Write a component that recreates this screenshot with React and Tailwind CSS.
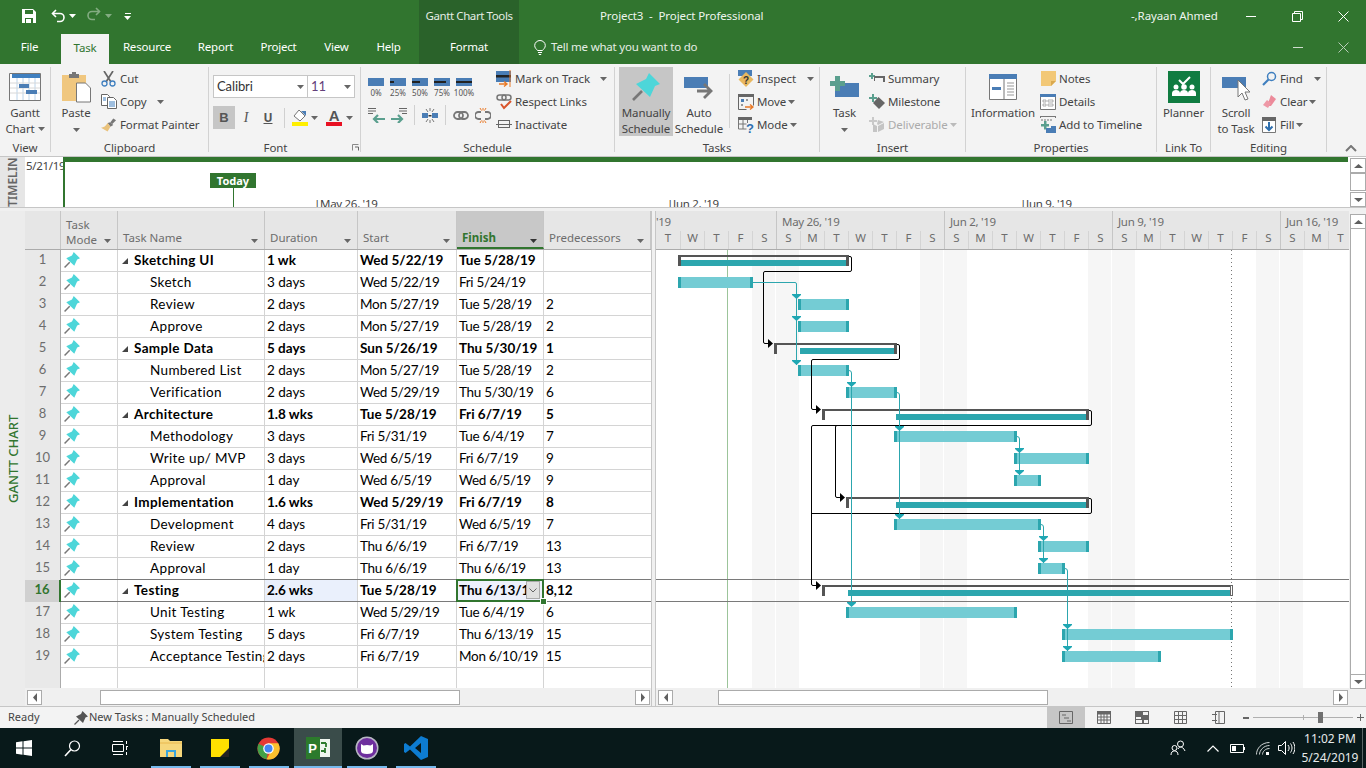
import React from "react";

const Caret = ({ c = "#666", className = "" }) => (
  <svg width="7" height="4" viewBox="0 0 7 4" className={className}><path d="M0 0h7L3.5 4z" fill={c} /></svg>
);

const Pin = ({ s = 14, c = "#4dd6d9", n = "#777" }) => (
  <svg width={s} height={s} viewBox="0 0 28 28">
    <path d="M10 18 1 27" stroke={n} strokeWidth="2.6" />
    <path d="M17 0 28 11 23 13 18 24 4 11 14 6z" fill={c} />
  </svg>
);

/* ---------- small ribbon icons ---------- */
const IcoSave = () => (
  <svg width="14" height="14" viewBox="0 0 14 14"><path d="M0 0h11l3 3v11H0z" fill="#fff" /><path d="M3 1h8v4H3z" fill="#31752f" /><path d="M3 9h8v5H3z" fill="#31752f" /><path d="M4 10h5v4H4z" fill="#fff" /></svg>
);
const IcoUndo = ({ c = "#fff" }) => (
  <svg width="15" height="14" viewBox="0 0 15 14" fill="none"><path d="M5 1 1.5 4.5 5 8" stroke={c} strokeWidth="1.6" /><path d="M2 4.5h7a4 4 0 0 1 0 8H6" stroke={c} strokeWidth="1.6" /></svg>
);
const IcoCut = () => (
  <svg width="16" height="16" viewBox="0 0 16 16" fill="none"><path d="M3 0l7 11M12 0 5 11" stroke="#666" strokeWidth="1.7" /><circle cx="3.5" cy="12.5" r="2.5" stroke="#3f7fbf" strokeWidth="1.3" /><circle cx="11.5" cy="12.5" r="2.5" stroke="#3f7fbf" strokeWidth="1.3" /></svg>
);
const IcoCopy = () => (
  <svg width="16" height="15" viewBox="0 0 16 15" fill="none"><path d="M.5.5h6l2 2v9h-8z" fill="#fff" stroke="#666" /><path d="M6.5 3.5h6l3 3v8h-9z" fill="#fff" stroke="#666" /><path d="M8 8h6M8 10h6M8 12h6M2 4h3M2 6h3" stroke="#3f7fbf" /></svg>
);
const IcoBrush = () => (
  <svg width="17" height="15" viewBox="0 0 17 15"><path d="M10 5l3 3-3 2-3-4z" fill="#777" /><path d="M13 1l3 2-4 4-2-2z" fill="#777" /><path d="M7 6l3 4-3 5-7-4c3 0 5-2 7-5z" fill="#e9c27c" /></svg>
);
const IcoMark = () => (
  <svg width="16" height="17" viewBox="0 0 16 17"><path d="M0 1h15v11H0z" fill="#4a7db5" /><path d="M0 5h15v2.5H0z" fill="#222" /><path d="M14 0v17" stroke="#e97a28" /><path d="M3 14h7M8 11.5l3 2.5-3 2.5" stroke="#e97a28" strokeWidth="1.4" fill="none" /></svg>
);
const IcoRespect = () => (
  <svg width="16" height="16" viewBox="0 0 16 16" fill="none"><rect x="1" y="1" width="9" height="5" rx="2.5" stroke="#777" strokeWidth="1.5" /><rect x="6" y="1" width="9" height="5" rx="2.5" stroke="#777" strokeWidth="1.5" /><path d="M5 10l3 4 7-7" stroke="#d9542b" strokeWidth="2" /></svg>
);
const IcoInact = () => (
  <svg width="16" height="9" viewBox="0 0 16 9" fill="none"><rect x="2.5" y=".5" width="11" height="7" stroke="#666" /><path d="M0 4.5h16" stroke="#666" /></svg>
);
const IcoInspect = () => (
  <svg width="16" height="17" viewBox="0 0 16 17"><path d="M0 0h14v6H0z" fill="#4a7db5" /><path d="M8 2l7.5 7.5L8 17 .5 9.5z" fill="#e9b85f" /><text x="8" y="13.5" fontSize="10" fontWeight="700" textAnchor="middle" fill="#333" fontFamily="Liberation Sans">?</text></svg>
);
const IcoMove = () => (
  <svg width="16" height="16" viewBox="0 0 16 16" fill="none"><path d="M.5.5h15v11M.5.5v15h8" stroke="#666" /><path d="M0 0h16v3H0z" fill="#666" /><path d="M3 5h3v3H3z" fill="#4a7db5" /><path d="M8 5h2v2H8zM3 10h2v2H3z" fill="#999" /><path d="M7 13h7M12 10.5l3 2.5-3 2.5" stroke="#e97a28" strokeWidth="1.4" /></svg>
);
const IcoMode = () => (
  <svg width="16" height="16" viewBox="0 0 16 16" fill="none"><path d="M0 0h14v3H0z" fill="#666" /><path d="M.5 3v9h8M5 3v9M.5 7h8M9.5 3v3" stroke="#777" /><text x="12" y="15.5" fontSize="13" fontWeight="700" textAnchor="middle" fill="#2f6fae" fontFamily="Liberation Sans">?</text></svg>
);
const IcoSummary = () => (
  <svg width="16" height="12" viewBox="0 0 16 12"><path d="M2 0h2v2h2v2H4v2H2V4H0V2h2z" fill="#5a9f8e" /><path d="M5 3h11v2H5z" fill="#666" /><path d="M14 3h2v6h-2zM5 5h1v3H5z" fill="#666" /></svg>
);
const IcoMilestone = () => (
  <svg width="16" height="15" viewBox="0 0 16 15"><path d="M9.5 3 16 9l-6 6-6-6z" fill="#666" /><path d="M3 0h2v3h3v2H5v3H3V5H0V3h3z" fill="#5a9f8e" /></svg>
);
const IcoDeliv = () => (
  <svg width="16" height="15" viewBox="0 0 16 15"><path d="M3 0h2v3h3v2H5v3H3V5H0V3h3z" fill="#c9c9c9" /><path d="M4 7l4 2v6H4zM9 9l6-3v6l-6 3zM9 3l6 2-6 3-1-1z" fill="#c4c4c4" /></svg>
);
const IcoNotes = () => (
  <svg width="15" height="15" viewBox="0 0 15 15"><path d="M0 0h15v10l-5 5H0z" fill="#f2c877" /><path d="M15 10h-5v5z" fill="#d9a94f" /></svg>
);
const IcoDetails = () => (
  <svg width="16" height="16" viewBox="0 0 16 16" fill="none"><path d="M.5.5h15v15H.5z" fill="#fff" stroke="#777" /><path d="M0 0h16v3H0z" fill="#4a7db5" /><path d="M3 6h3v2H3zM8 6h5v2H8zM3 10h3v2H3zM8 10h5v2H8z" stroke="#999" strokeWidth=".8" /></svg>
);
const IcoAddTl = () => (
  <svg width="16" height="17" viewBox="0 0 16 17" fill="none"><path d="M0 .5h16M.5 0v2M15.5 0v2" stroke="#777" /><path d="M1 4h11" stroke="#777" strokeDasharray="2 1" /><path d="M4 5h2.5v3H9v2.5H6.5v3H4v-3H1V8h3z" fill="#5a9f8e" /><path d="M6 12h10v5H6zM11 10h5v2h-5z" fill="#4a7db5" /></svg>
);
const IcoFind = () => (
  <svg width="15" height="15" viewBox="0 0 15 15" fill="none"><circle cx="9.5" cy="5.5" r="4" stroke="#3f7fbf" strokeWidth="1.5" /><path d="M6.5 8.5 1 14" stroke="#3f7fbf" strokeWidth="2.2" /></svg>
);
const IcoClear = () => (
  <svg width="14" height="13" viewBox="0 0 14 13"><path d="M9 0l5 4-5 7H5z" fill="#ec8a9a" /><path d="M5 5l4 3-3 5-5-3z" fill="#ee98a6" /></svg>
);
const IcoFill = () => (
  <svg width="14" height="16" viewBox="0 0 14 16" fill="none"><path d="M.5.5h13v15H.5z" fill="#fff" stroke="#777" /><path d="M0 0h14v4H0z" fill="#666" /><path d="M7 5v8M3.5 9.5 7 13l3.5-3.5" stroke="#2f6fae" strokeWidth="2" /></svg>
);

const Small = ({ icon, label, caret, c = "#444", capClass = "ml-[4px]" }) => (
  <div className="h-[23px] flex items-center whitespace-nowrap" style={{ color: c }}>
    <span className="w-[16px] flex items-center justify-center shrink-0">{icon}</span>
    <span className="ml-[3px]">{label}</span>
    {caret && <Caret className={capClass} c={c === "#444" ? "#666" : "#bbb"} />}
  </div>
);

const Big = ({ w, ml = 0, icon, l1, l2, caret, active }) => (
  <div className={`flex flex-col items-center shrink-0 h-[69px] ${active ? "bg-[#c6c6c6]" : ""}`} style={{ width: w, marginLeft: ml }}>
    <div className="h-[38px] w-full flex items-center justify-center">{icon}</div>
    <div className="h-[16px] leading-[16px] whitespace-nowrap flex items-center">{l1}</div>
    <div className="h-[15px] leading-[15px] whitespace-nowrap flex items-center">{l2}{caret === 2 && <Caret className="ml-[3px]" />}</div>
  </div>
);

const Group = ({ w, label, children, labelCls = "" }) => (
  <div className="shrink-0 h-[85px] flex flex-col border-r border-[#d2d2d2]" style={{ width: w }}>
    <div className="h-[74px] flex shrink-0">{children}</div>
    <div className={`h-[13px] leading-[13px] text-center relative shrink-0 ${labelCls}`}>{label}</div>
  </div>
);

const Pct = ({ n, label }) => (
  <div className="w-[16px] mr-[6px] flex flex-col items-center">
    <div className="h-[8px] w-[16px] bg-[#4a7db5] relative flex items-center">
      <div className="h-[2px] bg-[#222]" style={{ width: n * 16 }} />
    </div>
    <div className="text-[8px] leading-[11px] mt-[1px] text-[#555] tracking-normal">{label}</div>
  </div>
);

const IcoUndoFlip = () => <span className="inline-block scale-x-[-1]"><IcoUndo /></span>;

function TitleBar() {
  return (
    <div className="h-[32px] flex bg-[#31752f] text-white shrink-0 text-[11.5px] tracking-[-0.1px]">
      <div className="w-[419px] flex items-center pl-[22px]">
        <IcoSave />
        <span className="ml-[15px]"><IcoUndo /></span>
        <Caret className="ml-[3px]" c="#fff" />
        <span className="ml-[10px] opacity-40"><IcoUndoFlip /></span>
        <Caret className="ml-[4px] opacity-40" c="#fff" />
        <div className="ml-[12px] flex flex-col items-center gap-[2px]">
          <div className="w-[6px] h-[1px] bg-white" />
          <Caret c="#fff" />
        </div>
      </div>
      <div className="w-[100px] bg-[#2a622a] text-center leading-[32px] text-[#e4ece4] tracking-[-0.4px]">Gantt Chart Tools</div>
      <div className="w-[81px]" />
      <div className="w-[531px] leading-[32px] whitespace-pre text-[#eef4ee]">Project3  -  Project Professional</div>
      <div className="w-[115px] leading-[32px] text-[#eef4ee]">-,Rayaan Ahmed</div>
      <div className="flex-1 flex items-center">
        <div className="w-[10px] h-[1px] bg-white" />
        <svg width="11" height="11" viewBox="0 0 11 11" className="ml-[36px]" fill="none"><path d="M.5 2.5h8v8h-8zM2.5 2.5v-2h8v8h-2" stroke="#fff" /></svg>
        <svg width="11" height="11" viewBox="0 0 11 11" className="ml-[35px]" fill="none"><path d="M.5.5l10 10M10.5.5l-10 10" stroke="#fff" /></svg>
      </div>
    </div>
  );
}

function TabsBar() {
  const tab = (label, w) => (
    <div className="text-center leading-[30px]" style={{ width: w }}>{label}</div>
  );
  return (
    <div className="h-[32px] flex bg-[#31752f] text-white shrink-0 text-[11.5px] tracking-[-0.2px]">
      {tab("File", 59)}
      <div className="w-[2px]" />
      <div className="w-[48px] h-[30px] mt-[2px] bg-[#f3f3f3] text-[#31752f] text-center leading-[28px]">Task</div>
      {tab("Resource", 76)}
      {tab("Report", 61)}
      {tab("Project", 65)}
      {tab("View", 51)}
      {tab("Help", 53)}
      <div className="w-[4px]" />
      <div className="w-[100px] bg-[#2a622a] text-center leading-[30px]">Format</div>
      <div className="w-[15px]" />
      <div className="flex items-center h-[30px] text-[#e6eee6] w-[759px] whitespace-nowrap">
        <svg width="12" height="15" viewBox="0 0 12 15" fill="none" stroke="#fff"><path d="M3.5 10.5C2.5 9 .7 8 .7 5.5a5.3 5 0 0 1 10.6 0c0 2.500-1.800 3.500-2.800 5z" /><path d="M4 12.500h4M4.800 14.500h2.400" /></svg>
        <span className="ml-[5px]">Tell me what you want to do</span>
      </div>
      <div className="flex-1 flex items-center h-[30px]">
        <div className="w-[10px] h-[1px] bg-[#cfdccf]" />
        <svg width="11" height="11" viewBox="0 0 11 11" className="ml-[35px]" fill="none"><path d="M.5.5l10 10M10.5.5l-10 10" stroke="#b9cdb9" /></svg>
      </div>
    </div>
  );
}

function Ribbon() {
  return (
    <div className="h-[93px] bg-[#f3f3f3] border-b border-[#c6c6c6] pt-[3px] flex text-[#444] shrink-0 font-['Noto_Sans',sans-serif] text-[11.5px] tracking-[-0.1px]">
      <Group w={51} label="View">
        <Big w={50} l1="Gantt" l2="Chart" caret={2} icon={
          <svg width="32" height="28" viewBox="0 0 32 28" fill="none" className="mt-[2px]"><path d="M.5.5h31v27H.5z" fill="#fff" stroke="#777" /><path d="M3 1h28v4H3z" fill="#3f7fbf" /><path d="M8 5v22M14 5v22M20 5v22M26 5v22" stroke="#bcd4ea" /><path d="M1 10h30M1 15h30M1 20h30" stroke="#d8d8d8" /><path d="M10 11h10v4H10zM17 17h11v4H17z" fill="#4a7db5" /></svg>
        } />
      </Group>
      <Group w={158} label="Clipboard">
        <Big w={50} l1="Paste" l2={<Caret className="mt-[2px]" />} icon={
          <svg width="29" height="31" viewBox="0 0 29 31" className="mt-[2px]"><path d="M0 3h24v26H0z" fill="#f0c77f" /><path d="M7 2h3V0h4v2h3v4H7z" fill="#777" /><path d="M14.500 11h9l5 5v14h-14z" fill="#fff" stroke="#777" /></svg>
        } />
        <div>
          <Small icon={<IcoCut />} label="Cut" />
          <Small icon={<IcoCopy />} label="Copy" caret capClass="ml-[10px]" />
          <Small icon={<IcoBrush />} label="Format Painter" />
        </div>
      </Group>
      <Group w={152} labelCls="pr-[18px]" label={<span>Font<svg width="7" height="7" viewBox="0 0 7 7" className="absolute left-[143px] top-[3px]" fill="none"><path d="M.5 6.500v-6h6" stroke="#888" /><path d="M3 3h3.500v3.500" stroke="#666" /></svg></span>}>
        <div className="ml-[4px] mt-[8px] w-[146px]">
          <div className="flex h-[23px]">
            <div className="w-[95px] h-[23px] bg-white border border-[#c6c6c6] flex items-center justify-between px-[3px] font-['Lato',sans-serif] text-[13px] text-[#333]">Calibri<Caret /></div>
            <div className="w-[48px] h-[23px] -ml-[1px] bg-white border border-[#c6c6c6] flex items-center justify-between px-[3px] font-['Lato',sans-serif] text-[13px] text-[#63407a]">11<Caret /></div>
          </div>
          <div className="flex items-center h-[23px] mt-[8px]">
            <div className="w-[22px] h-[23px] bg-[#c6c6c6] flex items-center justify-center font-bold text-[13px] font-['Liberation_Sans',sans-serif] text-[#555]">B</div>
            <div className="w-[22px] text-center italic text-[14px] font-['Liberation_Serif',serif] text-[#555]">I</div>
            <div className="w-[22px] text-center underline font-bold text-[12px] text-[#555]">U</div>
            <div className="w-[1px] h-[20px] bg-[#d0d0d0] ml-[5px]" />
            <div className="ml-[7px] w-[16px] flex flex-col items-center">
              <svg width="16" height="12" viewBox="0 0 16 12"><path d="M7 0l6 6-5 5-6-5z" fill="#fff" stroke="#777" /><path d="M9 1h5v5z" fill="#4a7db5" /></svg>
              <div className="w-[16px] h-[4px] bg-[#ffef00]" />
            </div>
            <Caret className="ml-[3px]" />
            <div className="ml-[8px] w-[16px] flex flex-col items-center leading-[12px] text-[15px] font-bold text-[#555] font-['Liberation_Sans',sans-serif]">
              A<div className="w-[16px] h-[4px] bg-[#e81123]" />
            </div>
            <Caret className="ml-[4px]" />
          </div>
        </div>
      </Group>
      <Group w={254} label="Schedule">
        <div className="ml-[7px] w-[128px] mt-[11px]">
          <div className="flex">
            <Pct n={0} label="0%" /><Pct n={0.25} label="25%" /><Pct n={0.5} label="50%" /><Pct n={0.75} label="75%" /><Pct n={1} label="100%" />
          </div>
          <div className="flex items-center mt-[9px] h-[16px]">
            <svg width="18" height="15" viewBox="0 0 18 15" fill="none"><path d="M0 .5h8M0 3h8M0 5.500h5" stroke="#666" /><path d="M6 11h11M10 7l-4 4 4 4" stroke="#5a9f8e" strokeWidth="2.200" /></svg>
            <svg width="18" height="15" viewBox="0 0 18 15" fill="none" className="ml-[4px]"><path d="M9 .5h8M9 3h8M12 5.500h5" stroke="#666" /><path d="M1 11h11M8 7l4 4-4 4" stroke="#5a9f8e" strokeWidth="2.200" /></svg>
            <div className="w-[1px] h-[20px] bg-[#d0d0d0] ml-[6px]" />
            <svg width="16" height="15" viewBox="0 0 16 15" fill="none" className="ml-[7px]"><path d="M0 5h6v5H0zM10 5h6v5h-6z" fill="#4a7db5" /><path d="M6.500 7h3v1.500h-3z" fill="#333" /><path d="M4 1l2 3M12 1l-2 3M8 0v3M4 14l2-3M12 14l-2-3M8 12v3" stroke="#777" /></svg>
            <div className="w-[1px] h-[20px] bg-[#d0d0d0] ml-[7px]" />
            <svg width="16" height="9" viewBox="0 0 16 9" fill="none" className="ml-[7px]"><rect x="1" y="1" width="9" height="7" rx="3.500" stroke="#777" strokeWidth="1.800" /><rect x="6" y="1" width="9" height="7" rx="3.500" stroke="#777" strokeWidth="1.800" /></svg>
            <svg width="16" height="15" viewBox="0 0 16 15" fill="none" className="ml-[6px]"><path d="M6 4H3.500a3.500 3.500 0 0 0 0 7H6M10 4h2.500a3.500 3.500 0 0 1 0 7H10" stroke="#777" strokeWidth="1.800" /><path d="M5 0l1.500 2.500M11 0 9.500 2.500M8 0v2.500M5 15l1.500-2.500M11 15l-1.500-2.500M8 15v-2.500" stroke="#e97a28" /></svg>
          </div>
        </div>
        <div>
          <Small icon={<IcoMark />} label="Mark on Track" caret capClass="ml-[10px]" />
          <Small icon={<IcoRespect />} label="Respect Links" />
          <Small icon={<IcoInact />} label="Inactivate" />
        </div>
      </Group>
      <Group w={205} label="Tasks">
        <Big w={54} ml={4} active l1="Manually" l2="Schedule" icon={<span className="mt-[2px]"><Pin s={28} /></span>} />
        <Big w={52} l1="Auto" l2="Schedule" icon={
          <svg width="30" height="22" viewBox="0 0 30 22" fill="none" className="mt-[3px]"><path d="M0 0h24v11H0z" fill="#4a7db5" /><path d="M13 14h14M20 7l7 7-7 7" stroke="#777" strokeWidth="2.800" /></svg>
        } />
        <div className="w-[1px] h-[54px] bg-[#d2d2d2] ml-[4px] mt-[7px]" />
        <div className="ml-[8px]">
          <Small icon={<IcoInspect />} label="Inspect" caret capClass="ml-[11px]" />
          <Small icon={<IcoMove />} label="Move" caret capClass="ml-[2px]" />
          <Small icon={<IcoMode />} label="Mode" caret capClass="ml-[2px]" />
        </div>
      </Group>
      <Group w={146} label="Insert">
        <Big w={49} l1="Task" l2={<Caret className="mt-[2px]" />} icon={
          <svg width="29" height="21" viewBox="0 0 29 21" className="mt-[1px]"><path d="M5 7h24v14H5z" fill="#4a7db5" /><path d="M5 0h5v5h5v5h-5v5H5v-5H0V5h5z" fill="#5a9f8e" /></svg>
        } />
        <div>
          <Small icon={<IcoSummary />} label="Summary" />
          <Small icon={<IcoMilestone />} label="Milestone" />
          <Small icon={<IcoDeliv />} label="Deliverable" caret c="#ababab" capClass="ml-[2px]" />
        </div>
      </Group>
      <Group w={191} label="Properties">
        <Big w={74} l1="Information" l2="" icon={
          <svg width="28" height="26" viewBox="0 0 28 26" fill="none" className="mt-[2px]"><path d="M.5.5h27v25H.5z" fill="#fff" stroke="#777" /><path d="M0 0h28v5H0z" fill="#4a7db5" /><path d="M3 13h9v3H3z" fill="#4a7db5" /><path d="M15 5v20" stroke="#777" /><path d="M18 9h7M18 12h7M18 15h7M18 18h7M18 21h7" stroke="#999" /></svg>
        } />
        <div>
          <Small icon={<IcoNotes />} label="Notes" />
          <Small icon={<IcoDetails />} label="Details" />
          <Small icon={<IcoAddTl />} label="Add to Timeline" />
        </div>
      </Group>
      <Group w={54} label="Link To">
        <Big w={53} l1="Planner" l2="" icon={
          <svg width="32" height="32" viewBox="0 0 32 32" className="mt-[1px]"><path d="M0 0h32v32H0z" fill="#107c41" /><path d="M11 9l4 4 7-7" fill="none" stroke="#fff" strokeWidth="2" /><circle cx="8" cy="16" r="2.500" fill="#fff" /><circle cx="16" cy="16" r="2.800" fill="#fff" /><circle cx="24" cy="16" r="2.500" fill="#fff" /><path d="M4 25v-3c0-2 2-3 4-3s4 1 4 3c0-2 2-3 4-3s4 1 4 3c0-2 2-3 4-3s4 1 4 3v3z" fill="#fff" /></svg>
        } />
      </Group>
      <Group w={116} label="Editing">
        <Big w={50} l1="Scroll" l2="to Task" icon={
          <svg width="28" height="28" viewBox="0 0 28 28" className="mt-[2px]"><path d="M0 4h24v11H0z" fill="#4a7db5" /><path d="M16 7v17l4-4 3 7 3-1-3-7h5z" fill="#fff" stroke="#777" /></svg>
        } />
        <div>
          <Small icon={<IcoFind />} label="Find" caret capClass="ml-[11px]" />
          <Small icon={<IcoClear />} label="Clear" caret capClass="ml-[2px]" />
          <Small icon={<IcoFill />} label="Fill" caret capClass="ml-[2px]" />
        </div>
      </Group>
      <div className="flex-1 h-[85px] flex items-end justify-end pr-[9px]">
        <svg width="12" height="7" viewBox="0 0 12 7" fill="none"><path d="M1 6l5-5 5 5" stroke="#777" strokeWidth="2" /></svg>
      </div>
    </div>
  );
}

const SbBtn = ({ dir, w = 15, h = 15, className = "" }) => {
  const paths = { up: "M0 4 4.500 0 9 4z", down: "M0 0h9L4.500 4z", left: "M4 0v9L0 4.500z", right: "M0 0v9l4-4.500z" };
  const v = dir === "up" || dir === "down";
  return (
    <div className={`bg-white border border-[#ababab] flex items-center justify-center shrink-0 ${className}`} style={{ width: w, height: h }}>
      <svg width={v ? 9 : 4} height={v ? 4 : 9}><path d={paths[dir]} fill="#606060" /></svg>
    </div>
  );
};

function Timeline() {
  return (
    <div className="h-[51px] flex shrink-0 bg-white font-['Noto_Sans',sans-serif] text-[11.5px] text-[#444] border-b border-[#c6c6c6] overflow-hidden tracking-[-0.3px]">
      <div className="w-[25px] bg-[#e6e6e6] relative overflow-hidden">
        <div className="absolute left-[6px] top-[50px] origin-top-left -rotate-90 font-semibold text-[#666] text-[12px] leading-[14px] whitespace-nowrap tracking-normal">TIMELINE</div>
      </div>
      <div className="w-[38px] pl-[1px] pt-[1px] leading-[16px] overflow-hidden whitespace-nowrap">5/21/19</div>
      <div className="w-[1285px] relative border-l-2 border-t-[5px] border-[#31752f]">
        <div className="absolute left-[145px] top-[11px] w-[46px] h-[15px] bg-[#31752f] text-white font-bold text-[11px] leading-[15px] text-center tracking-normal">Today</div>
        <div className="absolute left-[168px] top-[26px] w-[1px] h-[24px] bg-[#31752f]" />
        <div className="absolute left-[249px] top-[34px] leading-[16px] whitespace-nowrap">|May 26, '19</div>
        <div className="absolute left-[602px] top-[34px] leading-[16px] whitespace-nowrap">|Jun 2, '19</div>
        <div className="absolute left-[955px] top-[34px] leading-[16px] whitespace-nowrap">|Jun 9, '19</div>
      </div>
      <div className="flex-1 flex flex-col items-end pt-[1px] gap-[1px]">
        <SbBtn dir="up" w={16} h={15} />
        <div className="w-[16px] h-[18px] bg-white border border-[#ababab] -mt-[1px]" />
        <SbBtn dir="down" w={16} h={15} />
      </div>
    </div>
  );
}

const rows = [
  ["Sketching UI", "1 wk", "Wed 5/22/19", "Tue 5/28/19", "", 1],
  ["Sketch", "3 days", "Wed 5/22/19", "Fri 5/24/19", "", 0],
  ["Review", "2 days", "Mon 5/27/19", "Tue 5/28/19", "2", 0],
  ["Approve", "2 days", "Mon 5/27/19", "Tue 5/28/19", "2", 0],
  ["Sample Data", "5 days", "Sun 5/26/19", "Thu 5/30/19", "1", 1],
  ["Numbered List", "2 days", "Mon 5/27/19", "Tue 5/28/19", "2", 0],
  ["Verification", "2 days", "Wed 5/29/19", "Thu 5/30/19", "6", 0],
  ["Architecture", "1.8 wks", "Tue 5/28/19", "Fri 6/7/19", "5", 1],
  ["Methodology", "3 days", "Fri 5/31/19", "Tue 6/4/19", "7", 0],
  ["Write up/ MVP", "3 days", "Wed 6/5/19", "Fri 6/7/19", "9", 0],
  ["Approval", "1 day", "Wed 6/5/19", "Wed 6/5/19", "9", 0],
  ["Implementation", "1.6 wks", "Wed 5/29/19", "Fri 6/7/19", "8", 1],
  ["Development", "4 days", "Fri 5/31/19", "Wed 6/5/19", "7", 0],
  ["Review", "2 days", "Thu 6/6/19", "Fri 6/7/19", "13", 0],
  ["Approval", "1 day", "Thu 6/6/19", "Thu 6/6/19", "13", 0],
  ["Testing", "2.6 wks", "Tue 5/28/19", "Thu 6/13/19", "8,12", 1],
  ["Unit Testing", "1 wk", "Wed 5/29/19", "Tue 6/4/19", "6", 0],
  ["System Testing", "5 days", "Fri 6/7/19", "Thu 6/13/19", "15", 0],
  ["Acceptance Testing", "2 days", "Fri 6/7/19", "Mon 6/10/19", "15", 0],
];

const HCell = ({ w, children, caret = true, active, cls = "pb-[4px]" }) => (
  <div className={`shrink-0 h-full border-r border-[#c6c6c6] relative flex items-end pl-[5px] ${cls} ${active ? "bg-[#c8c8c8] border-b-2 border-b-[#31752f] font-bold text-[#31752f]" : ""}`} style={{ width: w }}>
    <span className="leading-[15px]">{children}</span>
    {caret && <Caret className={`absolute right-[6px] ${active ? "bottom-[4px]" : "bottom-[6px]"}`} c={active ? "#333" : "#666"} />}
  </div>
);

const Cell = ({ w, children, cls = "" }) => (
  <div className={`shrink-0 h-full border-r border-[#d4d4d4] pl-[2px] flex items-center overflow-hidden whitespace-nowrap ${cls}`} style={{ width: w }}>{children}</div>
);

function TaskTable() {
  return (
    <div className="w-[626px] shrink-0 flex flex-col">
      <div className="h-[39px] flex bg-[#e6e6e6] border-b border-[#ababab] text-[#6d6d6d] font-['Noto_Sans',sans-serif] text-[11.5px] shrink-0">
        <div className="w-[36px] shrink-0 border-r border-[#c6c6c6]" />
        <HCell w={57} cls="pb-[2px]">Task<br />Mode</HCell>
        <HCell w={147}>Task Name</HCell>
        <HCell w={93}>Duration</HCell>
        <HCell w={99}>Start</HCell>
        <HCell w={87} active cls="pb-[2px]">Finish</HCell>
        <HCell w={107}>Predecessors</HCell>
      </div>
      <div className="flex-1 font-['Lato',sans-serif] text-[13.5px] text-black relative bg-white">
        {rows.map((r, i) => {
          const n = i + 1;
          const sel = n === 16;
          const bold = r[5] ? "font-bold" : "";
          const dateCls = r[5] ? "font-bold" : "tracking-[-0.3px]";
          const line = n === 15 || sel ? "border-[#7a7a7a]" : "border-[#d4d4d4]";
          return (
            <div key={i} className="h-[22px] flex">
              <div className={`w-[36px] shrink-0 flex items-center justify-center border-r pb-[2px] text-[13px] ${sel ? "bg-[#d0d0d0] text-[#31752f] font-bold border-r-2 border-r-[#31752f]" : "bg-[#e9e9e9] text-[#6d6d6d] border-r-[#ababab]"}`}>{n}</div>
              <div className={`flex flex-1 bg-white border-b ${line}`}>
                <Cell w={57} cls="pl-[3px] items-start pt-[2px]"><Pin s={16} /></Cell>
                <Cell w={147} cls={`pl-[4px] tracking-[0.35px] ${bold}`}>
                  {r[5] ? (
                    <><svg width="6" height="6" viewBox="0 0 6 6" className="mr-[6px] shrink-0"><path d="M6 0v6H0z" fill="#444" /></svg>{r[0]}</>
                  ) : (
                    <span className="ml-[28px]">{r[0]}</span>
                  )}
                </Cell>
                <Cell w={93} cls={`${bold} ${sel ? "bg-[#eaf0fc]" : ""}`}>{r[1]}</Cell>
                <Cell w={99} cls={dateCls}>{r[2]}</Cell>
                <Cell w={87} cls={dateCls}>{r[3]}</Cell>
                <Cell w={107} cls={`border-r-0 ${bold}`}>{r[4]}</Cell>
              </div>
            </div>
          );
        })}
        <div className="flex h-[20px]">
          <div className="w-[36px] bg-[#e9e9e9] border-r border-[#ababab]" />
          <div className="border-r border-[#d4d4d4] w-[57px]" />
          <div className="border-r border-[#d4d4d4] w-[147px]" />
          <div className="border-r border-[#d4d4d4] w-[93px]" />
          <div className="border-r border-[#d4d4d4] w-[99px]" />
          <div className="border-r border-[#d4d4d4] w-[87px]" />
        </div>
        {/* active cell */}
        <div className="absolute left-[431px] top-[329px] w-[88px] h-[23px] border-2 border-[#31752f] bg-[#eef1fc] font-bold flex items-center pl-[1px] overflow-hidden whitespace-nowrap">
          Thu 6/13/19
          <div className="absolute right-[2px] top-[0px] w-[14px] h-[18px] bg-[#e0e0e0] border border-[#aaa] flex items-center justify-center">
            <svg width="8" height="5" viewBox="0 0 8 5" fill="none"><path d="M.5.5 4 4 7.500.5" stroke="#666" /></svg>
          </div>
        </div>
        <div className="absolute left-[516px] top-[349px] w-[5px] h-[5px] bg-[#31752f] outline outline-1 outline-white" />
      </div>
      <HBar btnLeft={2} thumbLeft={73} thumbW={360} />
    </div>
  );
}

const HBar = ({ btnLeft, thumbLeft, thumbW }) => (
  <div className="h-[18px] pt-[2px] bg-[#f0f0f0] flex shrink-0" style={{ paddingLeft: btnLeft }}>
    <SbBtn dir="left" w={15} h={15} />
    <div className="flex-1 relative">
      <div className="absolute top-0 h-[15px] bg-white border border-[#ababab]" style={{ left: thumbLeft - 17 + btnLeft, width: thumbW }} />
    </div>
    <SbBtn dir="right" w={15} h={15} className="mr-[1px]" />
  </div>
);

const days = "TWTFSSMTWTFSSMTWTFSSMTWTFSSMT".split("");
const tiers = [[120, "'19"], [168, "May 26, '19"], [168, "Jun 2, '19"], [168, "Jun 9, '19"], [68, "Jun 16, '19"]];

const Detail = ({ x1, x2, y }) => (
  <g>
    <rect x={x1} y={y} width={x2 - x1} height="11" fill="#74ccd4" />
    <rect x={x1} y={y} width="3" height="11" fill="#2ca6ae" />
    <rect x={x2 - 3} y={y} width="3" height="11" fill="#2ca6ae" />
  </g>
);
const Summary = ({ x1, x2, y, t1, t2, open }) => (
  <g>
    <rect x={x1} y={y} width={x2 - x1} height="2" fill="#555" />
    <rect x={x1} y={y} width="3" height="11" fill="#555" />
    {open ? (
      <rect x={x2 - 2.500} y={y + .5} width="2" height="10" fill="#fff" stroke="#666" strokeWidth="1" />
    ) : (
      <rect x={x2 - 3} y={y} width="3" height="11" fill="#555" />
    )}
    <rect x={t1} y={y + 5} width={t2 - t1} height="6" fill="#2ca6ae" />
  </g>
);
const Arrow = ({ x, y }) => <path d={`M${x - 4.5} ${y}h9v1l-4.500 4-4.500-4z`} fill="#1fa7b3" />;
const ArrowR = ({ x, y }) => <path d={`M${x} ${y - 4.5}l5 4.500-5 4.500z`} fill="#000" />;

function GanttChart() {
  const black = [
    "M849 256.5H850Q851.5 256.5 851.5 258V270Q851.5 271.5 850 271.5H765Q763.5 271.5 763.5 273V342Q763.5 343.5 765 343.5H769",
    "M897 344.5H898Q899.5 344.5 899.5 346V358Q899.5 359.5 898 359.5H813Q811.500 359.5 811.5 361V408Q811.5 409.5 813 409.5H817",
    "M1089 410.5H1090Q1091.5 410.5 1091.5 412V424Q1091.5 425.5 1090 425.5H813Q811.5 425.5 811.5 427V584Q811.5 585.5 813 585.5H817",
    "M837 425.5Q835.5 425.5 835.5 427V496Q835.5 497.5 837 497.5H841",
    "M1089 498.5H1090Q1091.5 498.5 1091.5 500V512Q1091.5 513.5 1090 513.500H811.5",
  ];
  const teal = [
    "M753 282.5H795Q796.5 282.5 796.5 284V365",
    "M849 370.500Q851.5 370.5 851.5 373V606",
    "M897 392.5Q899.5 392.5 899.5 395V519",
    "M1017 436.500Q1019.5 436.5 1019.5 439V475",
    "M1041 524.5Q1043.5 524.5 1043.5 527V563",
    "M1065 568.5Q1067.5 568.5 1067.5 571V651",
  ];
  return (
    <svg width="693" height="438" viewBox="656 250 693 438" className="block bg-white">
      {[752, 776, 920, 944, 1088, 1112, 1256, 1280].map((x) => (
        <rect key={x} x={x} y="250" width="23" height="438" fill="#f6f6f6" />
      ))}
      <path d="M727.5 250V688" stroke="#9cc49a" />
      <path d="M1231.5 250V688" stroke="#777" strokeDasharray="1 3" />
      <path d="M656 579.5H1349M656 601.5H1349" stroke="#7a7a7a" />
      <Summary x1={678} x2={849} y={255} t1={681} t2={846} />
      <Summary x1={774} x2={897} y={343} t1={800} t2={894} />
      <Summary x1={822} x2={1089} y={409} t1={896} t2={1086} />
      <Summary x1={846} x2={1089} y={497} t1={896} t2={1086} />
      <Summary x1={822} x2={1233} y={585} t1={848} t2={1230} open />
      <Detail x1={678} x2={753} y={277} />
      <Detail x1={798} x2={849} y={299} />
      <Detail x1={798} x2={849} y={321} />
      <Detail x1={798} x2={849} y={365} />
      <Detail x1={846} x2={897} y={387} />
      <Detail x1={894} x2={1017} y={431} />
      <Detail x1={1014} x2={1089} y={453} />
      <Detail x1={1014} x2={1041} y={475} />
      <Detail x1={894} x2={1041} y={519} />
      <Detail x1={1038} x2={1089} y={541} />
      <Detail x1={1038} x2={1065} y={563} />
      <Detail x1={846} x2={1017} y={607} />
      <Detail x1={1062} x2={1233} y={629} />
      <Detail x1={1062} x2={1161} y={651} />
      {black.map((d, i) => <path key={i} d={d} fill="none" stroke="#000" />)}
      {teal.map((d, i) => <path key={i} d={d} fill="none" stroke="#2ca6ae" />)}
      <ArrowR x={768} y={343.5} /><ArrowR x={816} y={409.5} /><ArrowR x={840} y={497.5} /><ArrowR x={816} y={585.5} />
      {[[796.5, 294], [796.5, 316], [796.5, 360], [851.5, 382], [851.5, 602], [899.5, 426], [899.5, 514], [1019.5, 448], [1019.5, 470], [1043.5, 536], [1043.5, 558], [1067.5, 624], [1067.5, 646]].map(([x, y]) => (
        <Arrow key={`${x}-${y}`} x={x} y={y} />
      ))}
    </svg>
  );
}

function GanttPane() {
  return (
    <div className="w-[693px] shrink-0 flex flex-col">
      <div className="h-[39px] bg-[#e6e6e6] border-b border-[#ababab] text-[#6d6d6d] font-['Noto_Sans',sans-serif] text-[11.5px] overflow-hidden shrink-0">
        <div className="flex h-[20px] tracking-[-0.3px]">
          {tiers.map(([w, t], i) => (
            <div key={i} className={`shrink-0 whitespace-nowrap overflow-hidden pt-[3px] leading-[16px] ${i ? "border-l border-[#c6c6c6] pl-[5px]" : ""}`} style={{ width: w }}>{t}</div>
          ))}
        </div>
        <div className="flex h-[18px] w-[700px]">
          {days.map((d, i) => (
            <div key={i} className={`w-[24px] shrink-0 text-center leading-[14px] ${i % 7 === 5 ? "border-l border-[#c6c6c6]" : "border-l border-[#d4d4d4]"} ${i === 0 ? "border-l-0" : ""}`}>{d}</div>
          ))}
        </div>
      </div>
      <GanttChart />
      <HBar btnLeft={2} thumbLeft={60} thumbW={330} />
    </div>
  );
}

function Status() {
  const V = ({ children, active }) => (
    <div className={`w-[38px] h-full flex items-center justify-center ${active ? "bg-[#c6c6c6]" : ""}`}>{children}</div>
  );
  return (
    <div className="h-[22px] bg-[#f3f3f3] border-t border-[#c6c6c6] flex items-center text-[#444] font-['Noto_Sans',sans-serif] text-[11px] shrink-0">
      <div className="w-[74px] pl-[8px]">Ready</div>
      <Pin s={14} c="#555" n="#555" />
      <div className="ml-[1px] w-[958px] whitespace-nowrap">New Tasks : Manually Scheduled</div>
      <div className="h-full flex">
        <V active><svg width="14" height="13" viewBox="0 0 14 13" fill="none" stroke="#666"><path d="M.5.5h13v12H.5zM3 4h4M5 7h5M8 10h4" /></svg></V>
        <V><svg width="14" height="13" viewBox="0 0 14 13" fill="none" stroke="#666"><path d="M.5.5h13v12H.5zM.5 6h13M.5 9h13M4 3v10M7 3v10M10 3v10" /><path d="M0 0h14v3H0z" fill="#666" /></svg></V>
        <V><svg width="14" height="13" viewBox="0 0 14 13"><path d="M0 0h14v13H0z" fill="#666" /><path d="M1 6h5v2H1zM8 1h5v3H8zM1 9h6v3H1zM9 9h4v3H9z" fill="#f3f3f3" /></svg></V>
        <V><svg width="13" height="13" viewBox="0 0 13 13" fill="none" stroke="#666"><path d="M.5.5h12v12H.5zM.5 4.500h12M.5 8.500h12M4.500.5v12M8.500.5v12" /></svg></V>
        <V><svg width="13" height="13" viewBox="0 0 13 13" fill="none" stroke="#666"><path d="M3.500.5h9v12h-9zM0 3.500h5M0 9.500h5M7 .5v12" /></svg></V>
      </div>
      <div className="ml-[6px] w-[6px] h-[2px] bg-[#666]" />
      <div className="ml-[4px] w-[100px] h-[1px] bg-[#b0b0b0] relative">
        <div className="absolute left-[50px] -top-[2px] w-[1px] h-[5px] bg-[#b0b0b0]" />
        <div className="absolute left-[65px] -top-[5px] w-[5px] h-[11px] bg-[#707070]" />
      </div>
      <div className="ml-[4px] w-[7px] h-[7px] relative">
        <div className="absolute left-0 top-[3px] w-[7px] h-[1px] bg-[#666]" />
        <div className="absolute left-[3px] top-0 w-[1px] h-[7px] bg-[#666]" />
      </div>
    </div>
  );
}

function Taskbar() {
  const App = ({ children, active }) => (
    <div className="w-[40px] mx-[4.5px] h-full relative flex items-center justify-center shrink-0">
      {active && <div className="absolute -left-[4px] -right-[4px] top-0 bottom-0 bg-[#3a4c4a]" />}
      <div className="relative">{children}</div>
      <div className={`absolute bottom-0 h-[2px] bg-[#76b9ed] ${active ? "-left-[4px] -right-[4px]" : "left-0 right-0"}`} />
    </div>
  );
  return (
    <div className="h-[40px] bg-[#08191a] flex text-[#e6eaea] font-['Noto_Sans',sans-serif] text-[11.5px] shrink-0">
      <div className="w-[146px] shrink-0 flex items-center">
        <svg width="16" height="16" viewBox="0 0 16 16" className="ml-[16px]"><path d="M0 2.200 6.500 1.300v6.200H0zM7.500 1.200 16 0v7.500H7.500zM0 8.500h6.500v6.200L0 13.800zM7.500 8.500H16V16l-8.500-1.200z" fill="#fff" /></svg>
        <svg width="17" height="17" viewBox="0 0 17 17" fill="none" className="ml-[32px]" stroke="#fff" strokeWidth="1.200"><circle cx="10.500" cy="6" r="5" /><path d="M7 9.500 1 16" strokeWidth="1.600" /></svg>
        <svg width="17" height="16" viewBox="0 0 17 16" fill="none" className="ml-[31px]" stroke="#fff"><path d="M.5 4.500h11v7H.5zM1 1.500h10M1 14.500h10M14.500 1v3M14 6.500h2M14.500 12v3M14.500 7v3" /></svg>
      </div>
      <div className="flex shrink-0">
        <App>
          <svg width="22" height="18" viewBox="0 0 22 18"><path d="M0 0h8l2 2h12v16H0z" fill="#f6d77c" /><path d="M0 4h22" stroke="#e9b84f" /><path d="M6 11h10v7H6z" fill="#3aa5dc" /><path d="M8 13h6v5H8z" fill="#f6d77c" /></svg>
        </App>
        <App>
          <svg width="18" height="18" viewBox="0 0 18 18"><path d="M0 0h18v18H0z" fill="#ffe000" /><path d="M18 9v9H9z" fill="#222" /></svg>
        </App>
        <App>
          <svg width="23" height="23" viewBox="0 0 24 24"><circle cx="12" cy="12" r="11.500" fill="#e53935" /><path d="M12 12 1.700 7A11.500 11.500 0 0 0 10 23.300z" fill="#43a047" /><path d="M12 6.500h10.200A11.500 11.500 0 0 1 10 23.300L14.500 15z" fill="#fbc02d" /><circle cx="12" cy="12" r="5.500" fill="#fff" /><circle cx="12" cy="12" r="4.200" fill="#4285f4" /></svg>
        </App>
        <App active>
          <svg width="24" height="22" viewBox="0 0 24 22"><path d="M12 2h12v18H12z" fill="#eef5ee" /><path d="M0 0 14 0v22H0z" fill="#2c7a2c" /><text x="6.500" y="16" fontSize="13" fontWeight="700" textAnchor="middle" fill="#fff" fontFamily="Liberation Sans">P</text><path d="M15 6h5M20 6v4M15 14h4M19 11v5" stroke="#2c7a2c" strokeWidth="1.800" /></svg>
        </App>
        <App>
          <svg width="24" height="24" viewBox="0 0 24 24"><circle cx="12" cy="12" r="11.500" fill="#b8b8c4" /><circle cx="12" cy="12" r="10" fill="#6e2f9e" /><path d="M6 8l2.500 1.500c2-.7 5-.7 7 0L18 8v7c0 2-2 3-6 3s-6-1-6-3z" fill="#fff" /></svg>
        </App>
        <App>
          <svg width="24" height="24" viewBox="0 0 24 24"><path d="M17 0l7 3v18l-7 3L6 13.500 1.500 17 0 16V8l1.500-1L6 10.500zM17 7l-6 5 6 5z" fill="#0d7cd1" /></svg>
        </App>
      </div>
      <div className="ml-[730px] flex items-center h-full shrink-0">
        <svg width="16" height="16" viewBox="0 0 16 16" fill="none" stroke="#fff"><circle cx="10.500" cy="4" r="3" /><circle cx="4.500" cy="8" r="2.500" /><path d="M1 15c0-3 1.500-4 3.500-4S8 12 8 15M8 9c1-1.500 1.500-2 2.500-2S14 8 15 11" /></svg>
        <svg width="12" height="7" viewBox="0 0 12 7" fill="none" stroke="#fff" strokeWidth="1.200" className="ml-[21px]"><path d="M.5 6.500 6 1l5.500 5.500" /></svg>
        <svg width="15" height="9" viewBox="0 0 15 9" fill="none" className="ml-[11px]"><path d="M.5.5h13v8H.5z" stroke="#fff" /><path d="M2 2h4v5H2z" fill="#fff" /><path d="M14 3h1v3h-1z" fill="#fff" /></svg>
        <svg width="14" height="13" viewBox="0 0 14 13" fill="none" stroke="#cfd4d4" className="ml-[11px]"><path d="M.5 12.500c0-6 5-12 13-12M3.500 12.500c0-4 4-9 10-9M6.500 12.500c0-3 3-6 7-6" /><path d="M10 10h3v3h-3z" fill="#fff" stroke="none" /></svg>
        <svg width="17" height="14" viewBox="0 0 17 14" fill="none" stroke="#fff" className="ml-[8px]"><path d="M.5 4.500h3l4-4v13l-4-4h-3zM10 4c1.500 2 1.500 4 0 6M12.500 2.500c2 3 2 6 0 9M15 1c2.500 4 2.500 8 0 12" /></svg>
        <div className="w-[60px] ml-[5px] text-center leading-[19px] text-[12px] whitespace-nowrap">
          <div>11:02 PM</div>
          <div>5/24/2019</div>
        </div>
      </div>
      <div className="flex-1 flex justify-end"><div className="w-[1px] h-full bg-[#5a6666] mr-[3px]" /></div>
    </div>
  );
}

export default function App() {
  return (
    <div className="w-[1366px] h-[768px] overflow-hidden flex flex-col bg-white font-['Noto_Sans',sans-serif] text-[12px]">
      <TitleBar />
      <TabsBar />
      <Ribbon />
      <Timeline />
      <div className="h-[498px] flex flex-col bg-[#f0f0f0] shrink-0">
        <div className="h-[3px] shrink-0" />
        <div className="flex h-[495px]">
          <div className="w-[25px] shrink-0 bg-[#ececec] relative">
            <div className="absolute left-[5px] top-[292px] origin-top-left -rotate-90 text-[#31752f] font-medium text-[13px] leading-[16px] whitespace-nowrap">GANTT CHART</div>
          </div>
          <TaskTable />
          <div className="w-[5px] shrink-0 bg-[#f0f0f0] border-x border-[#c6c6c6]" />
          <GanttPane />
          <div className="flex-1 flex flex-col items-end pt-[3px]">
            <SbBtn dir="up" w={16} h={15} />
            <div className="w-[16px] h-[447px] -mt-[1px] bg-white border border-[#ababab]" />
            <SbBtn dir="down" w={16} h={15} className="-mt-[1px]" />
          </div>
        </div>
      </div>
      <Status />
      <Taskbar />
    </div>
  );
}
